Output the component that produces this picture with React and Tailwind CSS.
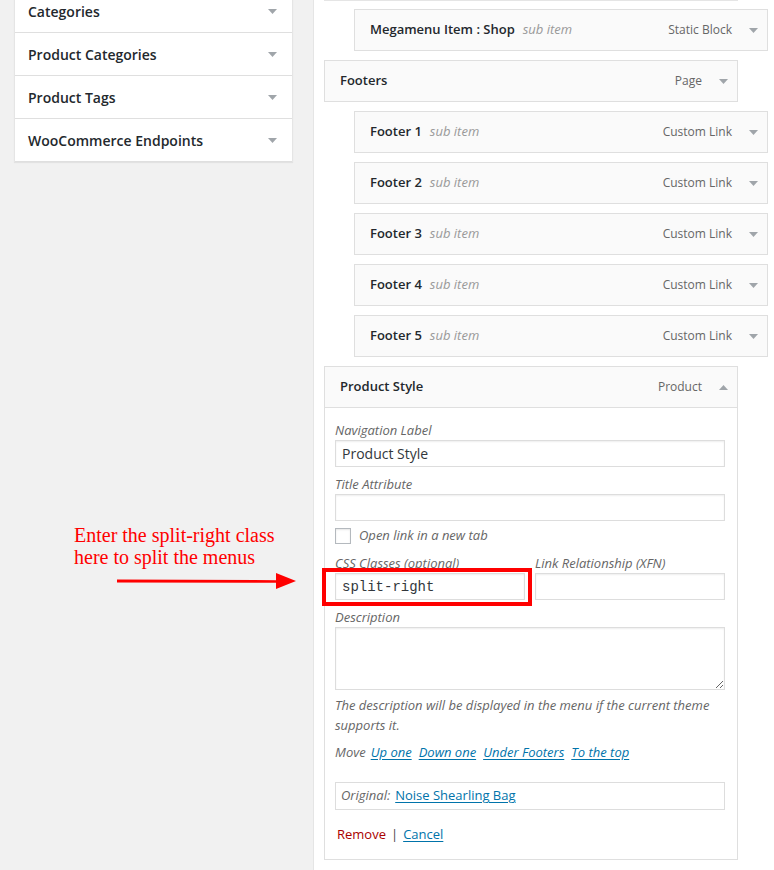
import React from "react";

const Caret = ({ up = false }) => (
  <svg width="9" height="5" viewBox="0 0 9 5" className="shrink-0">
    <path d={up ? "M0 5 L4.5 0 L9 5 Z" : "M0 0 L9 0 L4.5 5 Z"} fill="#a0a5aa" />
  </svg>
);

const sections = ["Categories", "Product Categories", "Product Tags", "WooCommerce Endpoints"];

const menuItems = [
  { title: "Megamenu Item : Shop", sub: true, type: "Static Block" },
  { title: "Footers", sub: false, type: "Page" },
  { title: "Footer 1", sub: true, type: "Custom Link" },
  { title: "Footer 2", sub: true, type: "Custom Link" },
  { title: "Footer 3", sub: true, type: "Custom Link" },
  { title: "Footer 4", sub: true, type: "Custom Link" },
  { title: "Footer 5", sub: true, type: "Custom Link" },
];

function ItemHandle({ title, sub, type, open }) {
  return (
    <div className="flex h-[42px] w-[414px] items-center border border-[#dfdfdf] bg-[#fafafa] pl-[15px] pr-[9px]">
      <span className="text-[13px] font-semibold text-[#23282d]">{title}</span>
      {sub && <span className="ml-[8px] text-[13px] italic text-[#999]">sub item</span>}
      <span className="ml-auto text-[12px] text-[#666]">{type}</span>
      <span className="ml-[17px] flex w-[9px] items-center">
        <Caret up={open} />
      </span>
    </div>
  );
}

const Label = ({ children }) => (
  <div className="h-[20px] text-[13px] italic leading-[20px] text-[#666]">{children}</div>
);

const inputCls =
  "block h-[27px] w-full border border-[#ddd] bg-white px-[6px] text-[14px] text-[#32373c] shadow-[inset_0_1px_2px_rgba(0,0,0,0.07)] outline-none";

export default function App() {
  return (
    <div className="relative flex h-[870px] w-[774px] overflow-hidden font-['Open_Sans',sans-serif] text-[#444]">
      {/* left column */}
      <div className="w-[313px] shrink-0 bg-[#f1f1f1]">
        <div className="-mt-[10px] ml-[14px] w-[279px] border-x border-[#e5e5e5] bg-white shadow-[0_1px_1px_rgba(0,0,0,0.06)]">
          {sections.map((s) => (
            <div key={s} className="flex h-[43px] items-center border-b border-[#dfdfdf] pl-[13px] pr-[15px]">
              <span className="text-[14px] font-semibold text-[#23282d]">{s}</span>
              <span className="ml-auto">
                <Caret />
              </span>
            </div>
          ))}
        </div>
      </div>

      {/* right column */}
      <div className="flex-1 border-l border-[#e5e5e5] bg-white pl-[10px]">
        <div className="h-px w-[414px] bg-[#e5e5e5]" />
        <div className="mt-[8px] flex flex-col gap-[9px]">
          {menuItems.map((it) => (
            <div key={it.title} className={it.sub ? "ml-[30px]" : ""}>
              <ItemHandle {...it} />
            </div>
          ))}

          {/* expanded item */}
          <div className="w-[414px]">
            <ItemHandle title="Product Style" type="Product" open />
            <div className="border-x border-b border-[#dfdfdf] bg-white pb-[15px] pl-[10px] pr-[12px] pt-[12px]">
              <Label>Navigation Label</Label>
              <input readOnly value="Product Style" className={inputCls} />

              <div className="mt-[7px]">
                <Label>Title Attribute</Label>
                <input readOnly value="" className={inputCls} />
              </div>

              <div className="mt-[7px] flex h-[16px] items-center">
                <span className="h-[16px] w-[16px] border border-[#b4b9be] bg-white shadow-[inset_0_1px_2px_rgba(0,0,0,0.1)]" />
                <span className="ml-[8px] text-[13px] italic text-[#666]">Open link in a new tab</span>
              </div>

              <div className="mt-[9px] flex gap-[10px]">
                <div className="w-[190px]">
                  <Label>CSS Classes (optional)</Label>
                  <input
                    readOnly
                    value="split-right"
                    className={inputCls + " font-['Liberation_Mono',monospace] text-[13px]"}
                  />
                </div>
                <div className="w-[190px]">
                  <Label>Link Relationship (XFN)</Label>
                  <input readOnly value="" className={inputCls} />
                </div>
              </div>

              <div className="mt-[7px]">
                <Label>Description</Label>
                <textarea
                  readOnly
                  value=""
                  className="block h-[63px] w-full border border-[#ddd] bg-white shadow-[inset_0_1px_2px_rgba(0,0,0,0.07)] outline-none"
                />
              </div>

              <p className="mt-[5px] text-[13px] italic leading-[20px] text-[#666]">
                The description will be displayed in the menu if the current theme
                <br />
                supports it.
              </p>

              <div className="mt-[7px] flex h-[20px] items-center gap-[7px] text-[13px] italic leading-[20px]">
                <span className="mr-[-2px] text-[#666]">Move</span>
                {["Up one", "Down one", "Under Footers", "To the top"].map((l) => (
                  <a key={l} className="text-[#0073aa] underline underline-offset-2">
                    {l}
                  </a>
                ))}
              </div>

              <div className="mt-[20px] flex h-[28px] items-center border border-[#ddd] px-[5px] text-[13px]">
                <span className="italic text-[#666]">Original:</span>
                <a className="ml-[5px] text-[#0073aa] underline underline-offset-2">Noise Shearling Bag</a>
              </div>

              <div className="mt-[14px] flex h-[20px] items-center pl-[2px] text-[13px] leading-[20px]">
                <a className="text-[#a00]">Remove</a>
                <span className="mx-[5px] text-[#444]">|</span>
                <a className="text-[#0073aa] underline underline-offset-2">Cancel</a>
              </div>
            </div>
          </div>
        </div>
      </div>

      {/* annotation */}
      <div className="absolute left-[74px] top-[524px] font-['Liberation_Serif',serif] text-[20px] leading-[22px] text-[#f00]">
        Enter the split-right class
        <br />
        here to split the menus
      </div>
      <svg className="absolute left-[110px] top-[570px]" width="190" height="22" viewBox="0 0 190 22">
        <path d="M7 9.5 L168 10.2 L168 12.8 L7 12.5 Z" fill="#f00" />
        <path d="M166 3 L186 11 L166 19 Z" fill="#f00" />
      </svg>
      <div className="absolute left-[322px] top-[568px] h-[38px] w-[210px] border-[4px] border-[#f00]" />
    </div>
  );
}
